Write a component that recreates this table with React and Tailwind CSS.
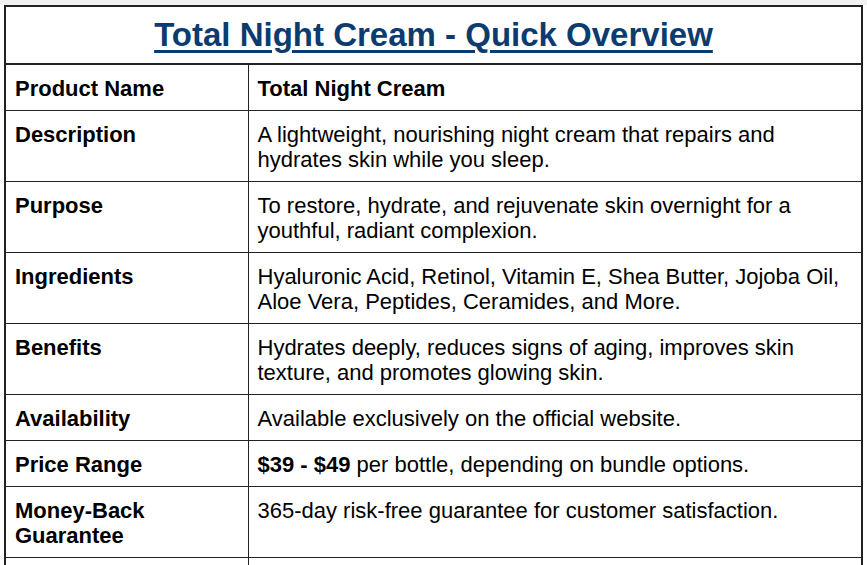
import React from 'react';

const rows = [
  { label: 'Product Name', value: <span className="font-bold">Total Night Cream</span> },
  { label: 'Description', value: 'A lightweight, nourishing night cream that repairs and hydrates skin while you sleep.' },
  { label: 'Purpose', value: 'To restore, hydrate, and rejuvenate skin overnight for a youthful, radiant complexion.' },
  { label: 'Ingredients', value: 'Hyaluronic Acid, Retinol, Vitamin E, Shea Butter, Jojoba Oil, Aloe Vera, Peptides, Ceramides, and More.' },
  { label: 'Benefits', value: 'Hydrates deeply, reduces signs of aging, improves skin texture, and promotes glowing skin.' },
  { label: 'Availability', value: 'Available exclusively on the official website.' },
  {
    label: 'Price Range',
    value: (
      <>
        <span className="font-bold">$39 - $49</span> per bottle, depending on bundle options.
      </>
    ),
  },
  { label: 'Money-Back Guarantee', value: '365-day risk-free guarantee for customer satisfaction.', wrap: true },
];

export default function App() {
  return (
    <div className="w-[867px] h-[565px] overflow-hidden bg-white font-['Liberation_Sans',Arial,sans-serif] text-black">
      <div className="h-[5px] bg-[#f1f1f1]" />
      <div className="pl-[4px] pr-[4px]">
        <table className="w-[859px] border-collapse border-2 border-[#222] table-fixed">
          <colgroup>
            <col className="w-[243px]" />
            <col />
          </colgroup>
          <thead>
            <tr>
              <th colSpan={2} className="border-2 border-[#222] h-[58px] text-center align-middle">
                <span className="text-[33px] leading-[36px] font-bold text-[#0b3b6f] underline decoration-[3px] underline-offset-[4px]">
                  Total Night Cream - Quick Overview
                </span>
              </th>
            </tr>
          </thead>
          <tbody className="text-[22px] leading-[25px]">
            {rows.map((r) => (
              <tr key={r.label}>
                <td className="border border-[#222] pl-[9px] pr-[8px] pt-[11px] pb-[9px] align-top font-bold">
                  {r.wrap ? (
                    <>
                      Money-Back
                      <br />
                      Guarantee
                    </>
                  ) : (
                    r.label
                  )}
                </td>
                <td className="border border-[#222] pl-[9px] pr-[8px] pt-[11px] pb-[9px] align-top">{r.value}</td>
              </tr>
            ))}
            <tr>
              <td className="border border-[#222] h-[46px]" />
              <td className="border border-[#222] h-[46px]" />
            </tr>
          </tbody>
        </table>
      </div>
    </div>
  );
}
